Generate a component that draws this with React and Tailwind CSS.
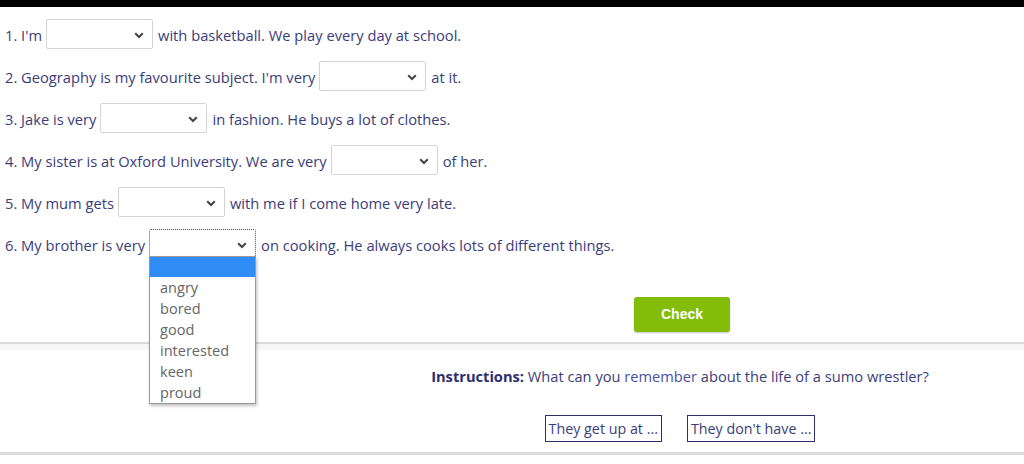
import React from 'react';

const rows = [
  { before: '1. I\'m', after: 'with basketball. We play every day at school.' },
  { before: '2. Geography is my favourite subject. I\'m very', after: 'at it.' },
  { before: '3. Jake is very', after: 'in fashion. He buys a lot of clothes.' },
  { before: '4. My sister is at Oxford University. We are very', after: 'of her.' },
  { before: '5. My mum gets', after: 'with me if I come home very late.' },
  { before: '6. My brother is very', after: 'on cooking. He always cooks lots of different things.', open: true },
];

const options = ['angry', 'bored', 'good', 'interested', 'keen', 'proud'];

function Chevron() {
  return (
    <svg width="10" height="7" viewBox="0 0 10 7" className="absolute right-[8px] top-[12px]">
      <path d="M1.2 1.2 L5 5 L8.8 1.2" fill="none" stroke="#444" strokeWidth="2" />
    </svg>
  );
}

function Dropdown({ open }) {
  return (
    <div className="relative">
      <div
        className={`relative w-[107px] h-[30px] bg-white rounded-[2px] ${open ? 'border border-dotted border-[#555]' : 'border border-[#d4d4d4]'}`}
      >
        <Chevron />
      </div>
      {open && (
        <div className="absolute left-0 top-[27px] z-10 w-[107px] bg-white border border-[#9a9a9a] shadow-[1px_2px_3px_rgba(0,0,0,0.25)]">
          <div className="h-[20px] bg-[#2f8cf5]" />
          <div>
            {options.map((o) => (
              <div key={o} className="h-[21px] leading-[21px] pl-[10px] text-[14.5px] text-[#666]">
                {o}
              </div>
            ))}
          </div>
        </div>
      )}
    </div>
  );
}

export default function App() {
  return (
    <div className="w-[1024px] h-[464px] bg-white overflow-hidden text-[#3b3d7a]" style={{ fontFamily: '"Open Sans", sans-serif' }}>
      <div className="h-[7px] bg-black" />

      <div className="pl-[5px] pt-[6px]">
        {rows.map((r, i) => (
          <div key={i} className="h-[42px] flex items-center text-[14.7px]">
            <span className="mr-[4px] pt-[3px]">{r.before}</span>
            <Dropdown open={r.open} />
            <span className="ml-[5px] pt-[3px]">{r.after}</span>
          </div>
        ))}
      </div>

      <div className="pl-[340px] flex justify-center mt-[32px]">
        <button className="w-[96px] h-[35px] rounded-[3px] bg-[#84bc0a] text-white text-[14px] font-bold shadow-[0_1px_2px_rgba(0,0,0,0.25)]" style={{ fontFamily: '"Liberation Sans", Arial, sans-serif' }}>
          Check
        </button>
      </div>

      <div className="mt-[10px] h-[2px] bg-[#d9d9d9]" />
      <div className="h-[6px] bg-[#f7f7f7]" />

      <div className="pl-[336px] flex flex-col items-center">
        <p className="mt-[16px] text-[14.65px]">
          <span className="font-bold text-[#2c2d6e]">Instructions:</span> What can you <span className="text-[#4b4fa6]">remember</span> about the life of a sumo wrestler?
        </p>
        <div className="mt-[27px] flex gap-[25px]">
          <div className="h-[27px] px-[3px] border border-[#2e2f66] text-[14.3px] leading-[25px]">They get up at ...</div>
          <div className="h-[27px] px-[3px] border border-[#2e2f66] text-[14.3px] leading-[25px]">They don't have ...</div>
        </div>
      </div>

      <div className="mt-[10px] h-[3px] bg-[#dcdcdc]" />
    </div>
  );
}
